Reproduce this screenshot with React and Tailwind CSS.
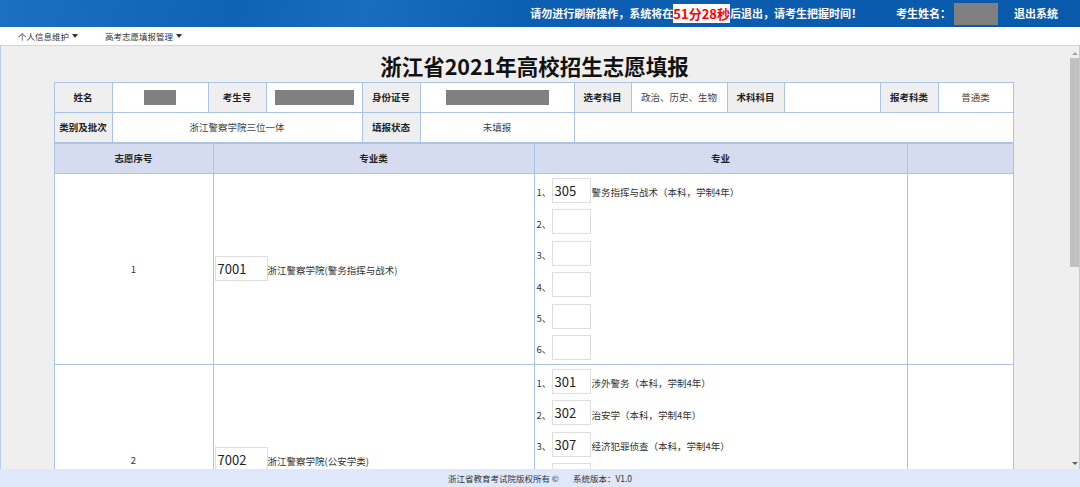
import React from "react";

function Caret() {
  return (
    <span className="ml-[3px] inline-block w-0 h-0 border-l-[3px] border-r-[3px] border-t-[4px] border-l-transparent border-r-transparent border-t-[#333]" />
  );
}

function Header() {
  return (
    <div className="h-[27px] shrink-0 flex items-center justify-end pr-[22px] text-white font-bold text-[11px] leading-[19px] bg-[linear-gradient(100deg,#1c70c3_0%,#0f62b4_22%,#1a6cbf_34%,#0d5fb1_48%,#0b5cae_70%,#0a5aac_100%)]">
      <span>请勿进行刷新操作，系统将在</span>
      <span className="bg-white text-[#ff0000] text-[13px] leading-[19px]">51分28秒</span>
      <span>后退出，请考生把握时间！</span>
      <span className="ml-[34px]">考生姓名：</span>
      <span className="ml-[3px] w-[44px] h-[22px] bg-[#808080]" />
      <span className="ml-[16px]">退出系统</span>
    </div>
  );
}

function Menu() {
  return (
    <div className="h-[19px] shrink-0 bg-white border-b border-[#c9d7ee] flex items-center text-[8.5px] text-[#333]">
      <span className="ml-[18px] flex items-center">个人信息维护<Caret /></span>
      <span className="ml-[27px] flex items-center">高考志愿填报管理<Caret /></span>
    </div>
  );
}

const lab = "border border-[#a9c4e4] bg-[#efefef] font-bold text-[#222] text-center";
const val = "border border-[#a9c4e4] bg-white text-[#444] text-center";

function InfoTable() {
  return (
    <table className="border-collapse table-fixed w-[959px] text-[9.5px] mt-[1px] mr-[2px]">
      <colgroup>
        <col className="w-[58px]" />
        <col className="w-[96px]" />
        <col className="w-[58px]" />
        <col className="w-[96px]" />
        <col className="w-[58px]" />
        <col className="w-[154px]" />
        <col className="w-[57px]" />
        <col className="w-[96px]" />
        <col className="w-[57px]" />
        <col className="w-[96px]" />
        <col className="w-[58px]" />
        <col className="w-[75px]" />
      </colgroup>
      <tbody>
        <tr className="h-[30px]">
          <td className={lab}>姓名</td>
          <td className={val}><div className="mx-auto w-[32px] h-[15px] bg-[#808080]" /></td>
          <td className={lab}>考生号</td>
          <td className={val}><div className="mx-auto w-[79px] h-[15px] bg-[#808080]" /></td>
          <td className={lab}>身份证号</td>
          <td className={val}><div className="mx-auto w-[103px] h-[15px] bg-[#808080]" /></td>
          <td className={lab}>选考科目</td>
          <td className={val}>政治、历史、生物</td>
          <td className={lab}>术科科目</td>
          <td className={val}></td>
          <td className={lab}>报考科类</td>
          <td className={val}>普通类</td>
        </tr>
        <tr className="h-[30px]">
          <td className={lab}>类别及批次</td>
          <td className={val} colSpan={3}>浙江警察学院三位一体</td>
          <td className={lab}>填报状态</td>
          <td className={val}>未填报</td>
          <td className={val} colSpan={6}></td>
        </tr>
      </tbody>
    </table>
  );
}

function Item({ n, code, text }) {
  return (
    <div className="flex items-center h-[25px]">
      <span className="w-[15px] pt-[4px] text-[9.5px] text-[#333]">{n}、</span>
      <div className="w-[39px] h-[25px] border border-[#dedede] bg-white text-[13px] leading-[23px] pl-[2px] text-[#222]">{code}</div>
      {text && <span className="ml-[1px] pt-[4px] text-[9.5px] text-[#333]">{text}</span>}
    </div>
  );
}

const cell = "border border-[#a9c4e4] bg-white align-middle";

function ChoiceRow({ idx, code, name, items }) {
  return (
    <tr>
      <td className={cell + " text-center text-[9.5px] text-[#333]"}>
        <div>{idx}</div>
      </td>
      <td className={cell + " pl-[1px]"}>
        <div className="flex items-center">
          <div className="w-[53px] h-[25px] border border-[#dedede] bg-white text-[13px] leading-[23px] pl-[2px] text-[#222]">{code}</div>
          <span className="pt-[2px] text-[9.5px] text-[#333]">{name}</span>
        </div>
      </td>
      <td className={cell + " pl-[2px] py-[4px]"}>
        <div className="flex flex-col gap-[6.4px]">
          {items.map((it, i) => (
            <Item key={i} n={i + 1} code={it[0]} text={it[1]} />
          ))}
        </div>
      </td>
      <td className={cell}></td>
    </tr>
  );
}

function ChoiceTable() {
  return (
    <table className="border-collapse table-fixed w-[959px] mr-[2px]">
      <colgroup>
        <col className="w-[159px]" />
        <col className="w-[321px]" />
        <col className="w-[373px]" />
        <col className="w-[106px]" />
      </colgroup>
      <tbody>
        <tr className="h-[30px] bg-[#d5dcef] text-[9.5px] font-bold text-[#222]">
          <td className="border border-[#a9c4e4] text-center">志愿序号</td>
          <td className="border border-[#a9c4e4] text-center">专业类</td>
          <td className="border border-[#a9c4e4] text-center">专业</td>
          <td className="border border-[#a9c4e4]"></td>
        </tr>
        <ChoiceRow
          idx="1"
          code="7001"
          name="浙江警察学院(警务指挥与战术)"
          items={[["305", "警务指挥与战术（本科，学制4年）"], ["", ""], ["", ""], ["", ""], ["", ""], ["", ""]]}
        />
        <ChoiceRow
          idx="2"
          code="7002"
          name="浙江警察学院(公安学类)"
          items={[["301", "涉外警务（本科，学制4年）"], ["302", "治安学（本科，学制4年）"], ["307", "经济犯罪侦查（本科，学制4年）"], ["", ""], ["", ""], ["", ""]]}
        />
      </tbody>
    </table>
  );
}

function Scrollbar() {
  return (
    <div className="w-[11px] shrink-0 flex flex-col">
      <div className="mt-[6px] ml-[4px] w-0 h-0 border-l-[3px] border-r-[3px] border-b-[3px] border-l-transparent border-r-transparent border-b-[#a3a3a3]" />
      <div className="mt-[3px] ml-[2px] w-[9px] h-[209px] bg-[#c1c1c1]" />
      <div className="flex-1" />
      <div className="mb-[4px] ml-[4px] w-0 h-0 border-l-[3px] border-r-[3px] border-t-[3px] border-l-transparent border-r-transparent border-t-[#606060]" />
    </div>
  );
}

export default function App() {
  return (
    <div className="w-[1080px] h-[487px] flex flex-col overflow-hidden font-['Noto_Sans_CJK_SC','Noto_Sans',sans-serif]">
      <Header />
      <Menu />
      <div className="flex-1 min-h-0 flex bg-[#efefef] border-l border-r border-[#b9cce6]">
        <div className="flex-1 min-w-0 overflow-hidden flex flex-col items-center pt-[5px]">
          <h1 className="text-[21.5px] leading-[30px] font-bold text-[#111]">浙江省2021年高校招生志愿填报</h1>
          <InfoTable />
          <ChoiceTable />
        </div>
        <Scrollbar />
      </div>
      <div className="h-[18px] shrink-0 bg-[#dee8fa] flex items-center justify-center gap-[14px] text-[8.5px] leading-[12px] text-[#333]">
        <span>浙江省教育考试院版权所有 ©</span>
        <span>系统版本：V1.0</span>
      </div>
    </div>
  );
}
